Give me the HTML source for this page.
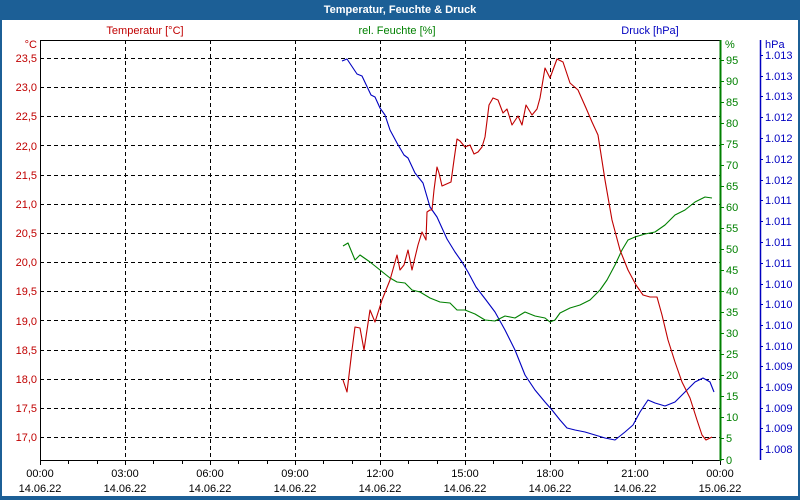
<!DOCTYPE html>
<html><head><meta charset="utf-8"><style>
html,body{margin:0;padding:0;width:800px;height:500px;overflow:hidden;background:#fff}
svg{display:block;font-family:"Liberation Sans","DejaVu Sans",sans-serif;font-size:11px}
</style></head><body>
<svg width="800" height="500" viewBox="0 0 800 500">
<rect x="0" y="0" width="800" height="500" fill="#1c5f96"/>
<rect x="2" y="20" width="796" height="476" fill="#fff"/>
<text x="400" y="13" text-anchor="middle" fill="#fff" font-weight="bold">Temperatur, Feuchte &amp; Druck</text>
<text x="145" y="34" text-anchor="middle" fill="#c00000">Temperatur [°C]</text>
<text x="397" y="34" text-anchor="middle" fill="#008000">rel. Feuchte [%]</text>
<text x="650" y="34" text-anchor="middle" fill="#0000c0">Druck [hPa]</text>
<g stroke="#000" stroke-width="1" stroke-dasharray="4,3" fill="none">
<path d="M125.5 40V460M210.5 40V460M295.5 40V460M380.5 40V460M465.5 40V460M550.5 40V460M635.5 40V460"/>
<path d="M40 58.5H720M40 87.5H720M40 116.5H720M40 145.5H720M40 175.5H720M40 204.5H720M40 233.5H720M40 262.5H720M40 291.5H720M40 320.5H720M40 350.5H720M40 379.5H720M40 408.5H720M40 437.5H720"/>
</g>
<path d="M40.5 40V460.5H720M40 40.5H720" stroke="#000" fill="none"/>
<path d="M40.5 460V465M68.5 460V464M97.5 460V464M125.5 460V465M153.5 460V464M182.5 460V464M210.5 460V465M238.5 460V464M267.5 460V464M295.5 460V465M323.5 460V464M352.5 460V464M380.5 460V465M408.5 460V464M437.5 460V464M465.5 460V465M493.5 460V464M522.5 460V464M550.5 460V465M578.5 460V464M607.5 460V464M635.5 460V465M663.5 460V464M692.5 460V464M720.5 460V465" stroke="#000"/>
<g fill="#c00000" text-anchor="end">
<text x="37" y="48">°C</text>
<text x="37" y="62">23,5</text><text x="37" y="91">23,0</text><text x="37" y="120">22,5</text><text x="37" y="150">22,0</text><text x="37" y="179">21,5</text><text x="37" y="208">21,0</text><text x="37" y="237">20,5</text><text x="37" y="266">20,0</text><text x="37" y="295">19,5</text><text x="37" y="325">19,0</text><text x="37" y="354">18,5</text><text x="37" y="383">18,0</text><text x="37" y="412">17,5</text><text x="37" y="441">17,0</text>
</g>
<g fill="#000" text-anchor="middle">
<text x="40" y="477">00:00</text><text x="125" y="477">03:00</text><text x="210" y="477">06:00</text><text x="295" y="477">09:00</text><text x="380" y="477">12:00</text><text x="465" y="477">15:00</text><text x="550" y="477">18:00</text><text x="635" y="477">21:00</text><text x="720" y="477">00:00</text>
<text x="40" y="492">14.06.22</text><text x="125" y="492">14.06.22</text><text x="210" y="492">14.06.22</text><text x="295" y="492">14.06.22</text><text x="380" y="492">14.06.22</text><text x="465" y="492">14.06.22</text><text x="550" y="492">14.06.22</text><text x="635" y="492">14.06.22</text><text x="720" y="492">15.06.22</text>
</g>
<path d="M720.5 40V461" stroke="#008000" stroke-width="2"/>
<g stroke="#008000"><path d="M720 60.5h4M720 81.5h4M720 102.5h4M720 123.5h4M720 144.5h4M720 165.5h4M720 186.5h4M720 207.5h4M720 228.5h4M720 249.5h4M720 270.5h4M720 291.5h4M720 312.5h4M720 333.5h4M720 354.5h4M720 375.5h4M720 396.5h4M720 417.5h4M720 438.5h4M720 459.5h4"/></g>
<g fill="#008000">
<text x="725" y="48">%</text>
<text x="726" y="64">95</text><text x="726" y="85">90</text><text x="726" y="106">85</text><text x="726" y="127">80</text><text x="726" y="148">75</text><text x="726" y="169">70</text><text x="726" y="190">65</text><text x="726" y="211">60</text><text x="726" y="232">55</text><text x="726" y="253">50</text><text x="726" y="274">45</text><text x="726" y="295">40</text><text x="726" y="316">35</text><text x="726" y="337">30</text><text x="726" y="358">25</text><text x="726" y="379">20</text><text x="726" y="400">15</text><text x="726" y="421">10</text><text x="726" y="442">5</text><text x="726" y="464">0</text>
</g>
<path d="M760.5 40V460" stroke="#0000c0" stroke-width="1.5"/>
<g stroke="#0000c0"><path d="M760 55.5h3M760 76.5h3M760 96.5h3M760 117.5h3M760 138.5h3M760 159.5h3M760 180.5h3M760 200.5h3M760 221.5h3M760 242.5h3M760 263.5h3M760 284.5h3M760 304.5h3M760 325.5h3M760 346.5h3M760 366.5h3M760 387.5h3M760 408.5h3M760 428.5h3M760 449.5h3"/></g>
<g fill="#0000c0">
<text x="765" y="48">hPa</text>
<text x="765" y="59">1.013</text><text x="765" y="80">1.013</text><text x="765" y="100">1.013</text><text x="765" y="121">1.012</text><text x="765" y="142">1.012</text><text x="765" y="163">1.012</text><text x="765" y="184">1.012</text><text x="765" y="204">1.011</text><text x="765" y="225">1.011</text><text x="765" y="246">1.011</text><text x="765" y="267">1.011</text><text x="765" y="288">1.010</text><text x="765" y="308">1.010</text><text x="765" y="329">1.010</text><text x="765" y="350">1.010</text><text x="765" y="370">1.009</text><text x="765" y="391">1.009</text><text x="765" y="412">1.009</text><text x="765" y="432">1.009</text><text x="765" y="453">1.008</text>
</g>
<g fill="none" stroke-width="1.1" stroke-linejoin="round">
<polyline stroke="#0000c0" points="342,61 347,59 357,74 362,76 371,95 375,97 380,108 385,115 390,130 397,143 404,155 408,158 415,173 423,183 430,207 437,217 447,239 455,252 462,262 468,272 476,287 486,300 495,312 505,330 515,350 525,375 535,390 545,402 552,410 560,420 567,428 575,430 585,432 595,435 605,438 615,440 625,432 633,425 640,412 648,400 655,403 665,406 675,402 685,392 695,382 703,378 710,382 714,392"/>
<polyline stroke="#008000" points="343,246 348,243 355,260 360,255 370,262 380,270 390,278 397,282 405,283 412,290 420,292 430,298 440,302 450,303 457,310 465,310 475,314 485,320 495,321 505,316 515,318 525,312 535,316 545,318 550,322 555,320 560,313 570,308 580,305 590,300 600,290 607,280 615,265 622,250 628,240 635,237 645,234 655,232 665,225 675,215 685,210 695,202 705,197 712,198"/>
<polyline stroke="#c00000" points="343,380 347,392 352,350 355,327 360,328 364,350 370,310 375,322 382,300 390,280 397,255 400,270 404,265 408,250 412,270 418,245 422,232 426,240 427,212 430,210 432,210 434,190 437,167 439,173 442,186 451,182 454,160 457,139 460,141 465,147 470,145 474,154 478,152 482,147 485,137 489,105 493,98 498,100 503,113 507,109 512,125 518,116 522,125 526,105 532,115 537,109 540,98 545,68 550,78 557,59 563,62 570,83 578,90 586,108 592,122 598,135 605,180 612,220 620,250 628,270 636,285 643,295 650,297 657,297 662,315 668,340 675,362 682,382 690,398 697,420 702,435 706,440 712,437"/>
</g>
</svg>
</body></html>
